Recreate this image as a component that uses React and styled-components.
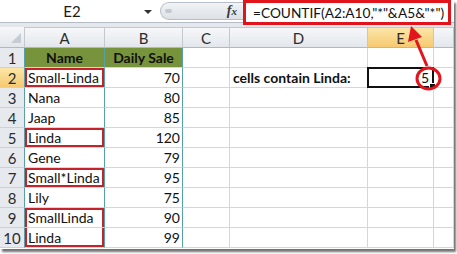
import React from 'react'
import styled, { createGlobalStyle, css } from 'styled-components'

const GlobalStyle = createGlobalStyle`
	html, body {
		margin: 0;
		padding: 0;
		background: #ffffff;
		overflow: hidden;
	}
	body {
		font-family: Lato, "Liberation Sans", sans-serif;
		color: #111111;
	}
`

const Frame = styled.div`
	position: relative;
	width: 457px;
	height: 254px;
	overflow: hidden;
`

const Sheet = styled.div`
	width: 454px;
	height: 249px;
	background: #ffffff;
	box-shadow: 2px 3px 2px rgba(0, 0, 0, 0.55);
	overflow: hidden;
`

const TopBar = styled.div`
	display: flex;
	height: 23px;
	box-sizing: border-box;
	background: #ffffff;
	border-bottom: 1px solid #b5bcc6;
`

const NameBox = styled.div`
	width: 157px;
	display: flex;
	align-items: center;
	font-size: 15px;
	color: #1a1a1a;
	> span {
		flex: 1;
		text-align: center;
	}
`

const DropArrow = styled.i`
	width: 0;
	height: 0;
	margin: 2px 5px 0 0;
	border-left: 4px solid transparent;
	border-right: 4px solid transparent;
	border-top: 4px solid #333333;
`

const PillArea = styled.div`
	flex: 1;
	display: flex;
	padding: 2px 0 2px 3px;
`

const Pill = styled.div`
	flex: 1;
	display: flex;
	align-items: center;
	justify-content: space-between;
	border: 1px solid #b7bec8;
	border-right: none;
	border-radius: 9px 0 0 9px;
	background: linear-gradient(180deg, #f1f3f5, #dde1e6);
`

const Grip = styled.i`
	width: 7px;
	height: 4px;
	margin-left: 4px;
	border-radius: 3px;
	background: #c4c9d0;
`

const Fx = styled.span`
	margin-right: 6px;
	font-family: "Liberation Serif", serif;
	font-style: italic;
	font-weight: bold;
	font-size: 14px;
	color: #3a3a3a;
	> small {
		font-size: 11px;
	}
`

const Formula = styled.div`
	position: relative;
	z-index: 2;
	align-self: flex-start;
	width: 208px;
	height: 25px;
	margin-right: 3px;
	box-sizing: border-box;
	border: 3px solid #e1141c;
	background: #ffffff;
	padding-left: 7px;
	display: flex;
	align-items: center;
	font-size: 13.7px;
	color: #111111;
	white-space: nowrap;
`

const Strip = styled.div`
	height: 4px;
	background: #e4e7eb;
`

const Grid = styled.div`
	display: grid;
	grid-template-columns: 25px 80px 78px 47px 138px 66px 20px;
	grid-template-rows: 21px;
	grid-auto-rows: 20px;
	font-size: 14px;
`

const headBase = css`
	box-sizing: border-box;
	display: flex;
	align-items: center;
	justify-content: center;
	color: #2c2c2c;
	font-size: 15px;
	border-right: 1px solid #c3c8cf;
	border-bottom: 1px solid #b1b8c2;
	background: ${p => p.$active
		? 'linear-gradient(180deg, #fce6a8, #f6c970)'
		: 'linear-gradient(180deg, #f6f7f9, #e3e7ec)'};
`

const Corner = styled.div`
	${headBase};
	position: relative;
	&::after {
		content: '';
		position: absolute;
		right: 3px;
		bottom: 4px;
		border-left: 10px solid transparent;
		border-bottom: 10px solid #c6ccd3;
	}
`

const ColHead = styled.div`
	${headBase};
	border-top: 1px solid #c3c8cf;
`

const RowHead = styled.div`
	${headBase};
	background: ${p => p.$active
		? 'linear-gradient(180deg, #fce6a8, #f6c970)'
		: '#e6e9ee'};
	border-bottom-color: #ccd1d8;
	border-right-color: #5d9fa8;
`

const markShadow = {
	box: 'inset 0 0 0 2px #c3232b',
	top: 'inset 2px 0 0 #c3232b, inset -2px 0 0 #c3232b, inset 0 2px 0 #c3232b',
	bottom: 'inset 2px 0 0 #c3232b, inset -2px 0 0 #c3232b, inset 0 -2px 0 #c3232b',
}

const Cell = styled.div`
	position: relative;
	box-sizing: border-box;
	display: flex;
	align-items: center;
	justify-content: ${p => (p.$right ? 'flex-end' : p.$center ? 'center' : 'flex-start')};
	padding: 0 ${p => (p.$right ? '2px' : '3px')} 0 3px;
	white-space: nowrap;
	border-right: 1px solid ${p => (p.$framed ? '#56a0aa' : '#d6d6d6')};
	border-bottom: 1px solid #d6d6d6;
	background: ${p => (p.$head ? '#77933c' : 'transparent')};
	font-weight: ${p => (p.$bold ? 700 : 400)};
	box-shadow: ${p => (p.$mark ? markShadow[p.$mark] : 'none')};
`

const ActiveCell = styled(Cell)`
	padding-right: 4px;
	&::after {
		content: '';
		position: absolute;
		left: -1px;
		top: -1px;
		right: -1px;
		bottom: -1px;
		border: 2px solid #111111;
	}
	&::before {
		content: '';
		position: absolute;
		z-index: 1;
		right: -3px;
		bottom: -3px;
		width: 5px;
		height: 5px;
		background: #111111;
		border: 1px solid #ffffff;
	}
`

const Overlay = styled.svg`
	position: absolute;
	left: 0;
	top: 0;
	pointer-events: none;
	z-index: 5;
`

// F is only a sliver at the window edge, its letter falls outside
const columns = ['A', 'B', 'C', 'D', 'E', '']

const rows = [
	{ name: 'Name', sale: 'Daily Sale', head: true },
	{ name: 'Small-Linda', sale: 70, mark: 'box' },
	{ name: 'Nana', sale: 80 },
	{ name: 'Jaap', sale: 85 },
	{ name: 'Linda', sale: 120, mark: 'box' },
	{ name: 'Gene', sale: 79 },
	{ name: 'Small*Linda', sale: 95, mark: 'box' },
	{ name: 'Lily', sale: 75 },
	{ name: 'SmallLinda', sale: 90, mark: 'top' },
	{ name: 'Linda', sale: 99, mark: 'bottom' },
]

const Annotation = () => (
	<Overlay width="457" height="254" viewBox="0 0 457 254">
		<ellipse cx="428.5" cy="78.5" rx="11.5" ry="10.5" fill="none" stroke="#e2141c" strokeWidth="3" />
		<line x1="427" y1="66" x2="416" y2="40" stroke="#e2141c" strokeWidth="3" />
		<polygon points="411,26 422,37 408,42" fill="#e2141c" />
	</Overlay>
)

const App = () => (
	<Frame>
		<GlobalStyle />
		<Sheet>
			<TopBar>
				<NameBox><span>E2</span><DropArrow /></NameBox>
				<PillArea>
					<Pill>
						<Grip />
						<Fx>f<small>x</small></Fx>
					</Pill>
				</PillArea>
				<Formula>=COUNTIF(A2:A10,"*"&amp;A5&amp;"*")</Formula>
			</TopBar>
			<Strip />
			<Grid>
				<Corner />
				{columns.map((c, i) => <ColHead key={i} $active={c === 'E'}>{c}</ColHead>)}
				{rows.map((r, i) => (
					<React.Fragment key={i}>
						<RowHead $active={i === 1}>{i + 1}</RowHead>
						<Cell $framed $head={r.head} $bold={r.head} $center={r.head} $mark={r.mark}>{r.name}</Cell>
						<Cell $framed $head={r.head} $bold={r.head} $center={r.head} $right={!r.head}>{r.sale}</Cell>
						<Cell />
						<Cell $bold>{i === 1 ? 'cells contain Linda:' : ''}</Cell>
						{i === 1 ? <ActiveCell $right>5</ActiveCell> : <Cell />}
						<Cell />
					</React.Fragment>
				))}
			</Grid>
		</Sheet>
		<Annotation />
	</Frame>
)

export default App
